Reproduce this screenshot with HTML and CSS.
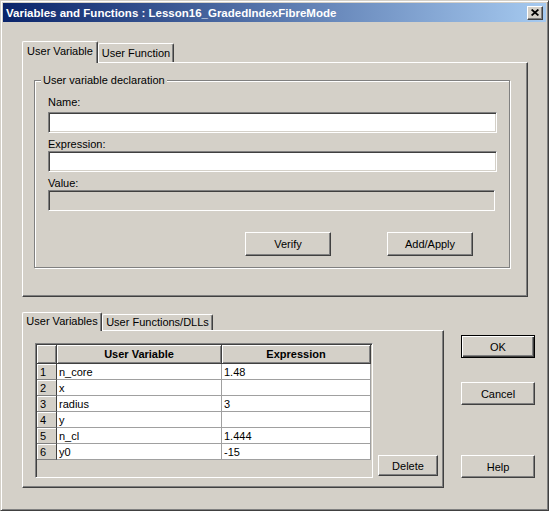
FILE: index.html
```html
<!DOCTYPE html>
<html>
<head>
<meta charset="utf-8">
<title>Variables and Functions</title>
<link rel="stylesheet" href="styles.css">
</head>
<body>
<div class="window">
  <div class="titlebar">
    <span class="title">Variables and Functions : Lesson16_GradedIndexFibreMode</span>
    <span class="close"><svg width="8" height="7" viewBox="0 0 8 7"><path d="M0.6 0.5 L7.4 6.5 M7.4 0.5 L0.6 6.5" stroke="#000" stroke-width="1.7" fill="none"/></svg></span>
  </div>
  <div class="client">
    <div class="tabctl upper">
      <div class="tabstrip">
        <div class="tab sel w-uv">User Variable</div>
        <div class="tab w-uf">User Function</div>
      </div>
      <div class="tabpanel">
        <fieldset class="group">
          <legend>User variable declaration</legend>
          <label class="lbl first">Name:</label>
          <input class="edit" type="text">
          <label class="lbl">Expression:</label>
          <input class="edit" type="text">
          <label class="lbl">Value:</label>
          <div class="edit readonly"></div>
          <div class="btnrow">
            <button class="btn wide">Verify</button>
            <button class="btn wide">Add/Apply</button>
          </div>
        </fieldset>
      </div>
    </div>
    <div class="lower">
      <div class="tabctl bottom">
        <div class="tabstrip small">
          <div class="tab sel w-uvs">User Variables</div>
          <div class="tab w-ufd">User Functions/DLLs</div>
        </div>
        <div class="tabpanel row">
          <div class="grid">
            <table>
              <thead>
                <tr class="hdr"><th class="c0"></th><th class="c1">User Variable</th><th class="c2">Expression</th></tr>
              </thead>
              <tbody>
                <tr><td class="rn">1</td><td>n_core</td><td>1.48</td></tr>
                <tr><td class="rn">2</td><td>x</td><td></td></tr>
                <tr><td class="rn">3</td><td>radius</td><td>3</td></tr>
                <tr><td class="rn">4</td><td>y</td><td></td></tr>
                <tr><td class="rn">5</td><td>n_cl</td><td>1.444</td></tr>
                <tr><td class="rn">6</td><td>y0</td><td>-15</td></tr>
              </tbody>
            </table>
          </div>
          <button class="btn del">Delete</button>
        </div>
      </div>
      <div class="side">
        <button class="btn sbtn default">OK</button>
        <button class="btn sbtn cancel">Cancel</button>
        <button class="btn sbtn help">Help</button>
      </div>
    </div>
  </div>
</div>
</body>
</html>
```
FILE: styles.css
```css
* { box-sizing: border-box; }
html, body { margin: 0; padding: 0; background: #d4d0c8; }
body {
  font-family: "Liberation Sans", Arial, sans-serif;
  font-size: 11px;
  color: #000;
}
.window {
  width: 549px;
  height: 511px;
  background: #d4d0c8;
  border: 1px solid;
  border-color: #d4d0c8 #404040 #404040 #d4d0c8;
  box-shadow: inset 1px 1px 0 #fff, inset -1px -1px 0 #808080;
  padding: 2px;
  display: flex;
  flex-direction: column;
}
.titlebar {
  flex: none;
  height: 19px;
  background: linear-gradient(to right, #0a246a, #a6caf0);
  display: flex;
  align-items: center;
  padding: 0 3px 0 3px;
}
.title {
  flex: 1;
  color: #fff;
  font-weight: bold;
  font-size: 11.5px;
  white-space: nowrap;
}
.close {
  width: 16px;
  height: 14px;
  background: #d4d0c8;
  border: 1px solid;
  border-color: #fff #404040 #404040 #fff;
  box-shadow: inset -1px -1px 0 #808080;
  display: flex;
  align-items: center;
  justify-content: center;
}
.close svg { display: block; }
.client {
  flex: 1;
  padding: 19px 0 0 19px;
}

/* tab controls */
.tabctl { display: flex; flex-direction: column; }
.tabctl.upper { width: 506px; height: 256px; }
.tabctl.bottom { width: 422px; height: 176px; }
.tabstrip {
  display: flex;
  align-items: flex-end;
  height: 21px;
  position: relative;
  z-index: 1;
}
.tabstrip.small { height: 18px; }
.tab {
  height: 19px;
  background: #d4d0c8;
  border-top: 1px solid #fff;
  border-left: 1px solid #fff;
  border-right: 1px solid #404040;
  box-shadow: inset -1px 0 0 #808080;
  border-radius: 2px 2px 0 0;
  text-align: center;
  line-height: 18px;
  white-space: nowrap;
}
.tab.sel { height: 22px; margin-bottom: -1px; line-height: 19px; }
.tabstrip.small .tab { height: 16px; line-height: 15px; }
.tabstrip.small .tab.sel { height: 19px; line-height: 17px; }
.w-uv { width: 76px; }
.w-uf { width: 76px; }
.w-uvs { width: 80px; }
.w-ufd { width: 111px; }
.tabpanel {
  flex: 1;
  border: 1px solid;
  border-color: #fff #404040 #404040 #fff;
  box-shadow: inset -1px -1px 0 #808080;
}

/* group box */
.group {
  margin: 11px 0 0 11px;
  width: 476px;
  min-inline-size: 0;
  padding: 9px 12px 11px 13px;
  border: 1px solid #808080;
  box-shadow: inset 1px 1px 0 #fff, 1px 1px 0 #fff;
}
.group legend {
  padding: 0 2px;
  margin-left: -7px;
  line-height: 13px;
  background: #d4d0c8;
}
.lbl {
  display: block;
  height: 13px;
  line-height: 13px;
  margin-top: 5px;
}
.lbl.first { margin-top: 0; margin-bottom: 3px; }
.edit {
  display: block;
  width: 449px;
  height: 21px;
  margin: 0;
  padding: 0 3px;
  font: inherit;
  background: #fff;
  border: 1px solid;
  border-color: #808080 #fff #fff #808080;
  box-shadow: inset 1px 1px 0 #404040, inset -1px -1px 0 #d4d0c8;
  outline: none;
}
.edit.readonly { width: 447px; background: #d4d0c8; }
.btnrow {
  display: flex;
  justify-content: flex-end;
  gap: 56px;
  margin-top: 21px;
  padding-right: 24px;
}

/* buttons */
.btn {
  font: inherit;
  color: #000;
  background: #d4d0c8;
  border: 1px solid;
  border-color: #fff #404040 #404040 #fff;
  box-shadow: inset -1px -1px 0 #808080;
  padding: 0;
  margin: 0;
}
.btn.wide { width: 86px; height: 24px; }
.btn.del { width: 60px; height: 21px; margin: 0 0 2px 5px; }

/* grid */
.tabpanel.row {
  display: flex;
  align-items: flex-end;
  padding: 12px 0 9px 12px;
}
.grid {
  width: 338px;
  height: 135px;
  padding: 1px;
  background: #d4d0c8;
  border: 1px solid;
  border-color: #808080 #fff #fff #808080;
  box-shadow: inset 1px 1px 0 #404040, inset -1px -1px 0 #d4d0c8;
}
.grid table {
  border-collapse: separate;
  border-spacing: 0;
  table-layout: fixed;
  width: 334px;
}
.grid th, .grid td {
  padding: 0;
  white-space: nowrap;
  overflow: hidden;
}
.grid .c0 { width: 20px; }
.grid .c1 { width: 165px; }
.grid .c2 { width: 149px; }
.grid tr.hdr { height: 19px; }
.grid th {
  height: 19px;
  background: #d4d0c8;
  font-weight: bold;
  text-align: center;
  border-right: 1px solid #404040;
  border-bottom: 1px solid #404040;
  box-shadow: inset 1px 1px 0 #fff, inset -1px -1px 0 #808080;
}
.grid tbody tr { height: 16px; }
.grid td {
  height: 16px;
  line-height: 14px;
  background: #fff;
  padding-left: 2px;
  border-right: 1px solid #a0a0a0;
  border-bottom: 1px solid #a0a0a0;
}
.grid td.rn {
  background: #d4d0c8;
  padding-left: 3px;
  border-right: 1px solid #404040;
  border-bottom: 1px solid #808080;
  box-shadow: inset 1px 1px 0 #fff;
}

/* side buttons */
.lower {
  display: flex;
  margin-top: 15px;
}
.side {
  display: flex;
  flex-direction: column;
  margin-left: 17px;
  padding-top: 23px;
}
.sbtn { width: 74px; height: 23px; }
.sbtn.default {
  border: 1px solid #000;
  box-shadow: inset 1px 1px 0 #fff, inset -1px -1px 0 #404040, inset -2px -2px 0 #808080;
}
.sbtn.cancel { margin-top: 24px; }
.sbtn.help { margin-top: 50px; }
```
